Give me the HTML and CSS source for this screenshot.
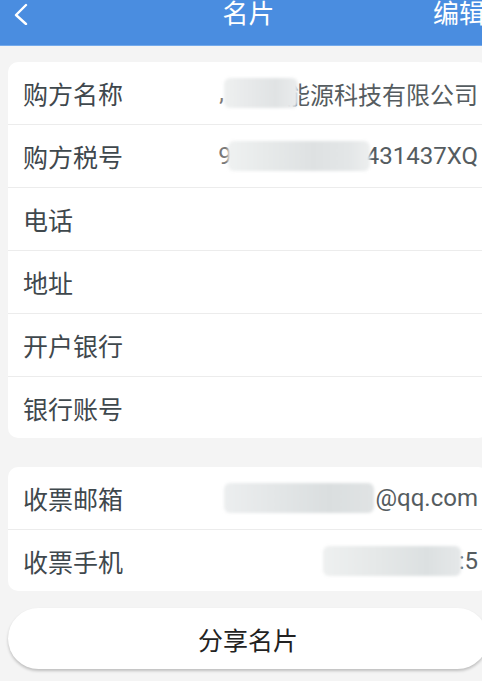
FILE: index.html
```html
<!DOCTYPE html>
<html lang="zh-CN">

<head>
    <meta charset="UTF-8">
    <meta name="viewport" content="width=device-width, initial-scale=1.0">
    <title>名片</title>
    <link rel="stylesheet" href="styles.css">
</head>

<body>
    <div class="page">
        <div class="header">
            <a class="back" href="javascript:;">
                <svg width="18" height="22" viewBox="0 0 18 22">
                    <polyline points="14,2 4,12 14,21" fill="none" stroke="#fff" stroke-width="2.4" stroke-linecap="round" stroke-linejoin="round" />
                </svg>
            </a>
            <div class="title">名片</div>
            <a class="edit" href="javascript:;">编辑</a>
        </div>

        <ul class="card">
            <li class="row">
                <span class="label">购方名称</span>
                <span class="value"><span class="dot">,</span><span class="mask mask-name"></span>能源科技有限公司</span>
            </li>
            <li class="row">
                <span class="label">购方税号</span>
                <span class="value"><span class="dot">9</span><span class="mask mask-tax"></span>431437XQ</span>
            </li>
            <li class="row"><span class="label">电话</span></li>
            <li class="row"><span class="label">地址</span></li>
            <li class="row"><span class="label">开户银行</span></li>
            <li class="row"><span class="label">银行账号</span></li>
        </ul>

        <ul class="card card-second">
            <li class="row">
                <span class="label">收票邮箱</span>
                <span class="value"><span class="mask mask-mail"></span>@qq.com</span>
            </li>
            <li class="row">
                <span class="label">收票手机</span>
                <span class="value"><span class="mask mask-phone"></span>:5</span>
            </li>
        </ul>

        <a class="share" href="javascript:;">分享名片</a>
    </div>
</body>

</html>
```

FILE: styles.css
```css
a,
ul,
li {
    list-style: none;
    text-decoration: none;
    margin: 0;
    padding: 0;
}

html,
body {
    margin: 0;
    width: 482px;
    height: 681px;
    overflow: hidden;
    background: #f4f4f4;
    font-family: Roboto, "Noto Sans CJK SC", sans-serif;
}

/* the screen is a bit wider than the shot, right side is cut */
.page {
    width: 496px;
}

.header {
    height: 45px;
    background: #4a8de0;
    border-bottom: 1px solid #74aaeb;
    display: flex;
    align-items: flex-start;
    justify-content: space-between;
    padding: 0 11px 0 12px;
    color: #fff;
}

.back {
    display: flex;
    padding-top: 3px;
    width: 56px;
}

.title {
    font-size: 26px;
    line-height: 28px;
}

.edit {
    color: #fff;
    font-size: 26px;
    line-height: 28px;
    width: 56px;
    text-align: right;
}

.card {
    margin: 16px 8px 0;
    background: #fff;
    border-radius: 10px;
    overflow: hidden;
}

.card-second {
    margin-top: 29px;
}

.row {
    height: 62px;
    display: flex;
    align-items: center;
    justify-content: space-between;
    padding: 0 10px 0 15px;
    border-bottom: 1px solid #ececec;
}

.row:last-child {
    height: 61px;
    border-bottom: 0;
}

.label {
    font-size: 25px;
    color: #3f484d;
}

.value {
    display: flex;
    align-items: center;
    font-size: 24px;
    color: #555c60;
    white-space: nowrap;
}

.dot {
    color: #777;
}

.mask {
    display: inline-block;
    height: 30px;
    border-radius: 6px;
    filter: blur(1.5px);
    position: relative;
    z-index: 1;
}

.mask-name {
    width: 74px;
    margin: 0 -12px 0 0;
    background: linear-gradient(90deg, #eef0f0, #e6e8e9 40%, #e0e3e4 70%, #eaeced);
}

.mask-tax {
    width: 142px;
    margin: 0 -4px 0 -4px;
    background: linear-gradient(90deg, #eff1f1, #e6e9e9 30%, #dee1e2 60%, #e3e6e7 85%, #edefef);
}

.mask-mail {
    width: 150px;
    margin-right: 2px;
    background: linear-gradient(90deg, #eceeef, #e3e6e7 35%, #dadedf 70%, #e0e3e4);
}

.mask-phone {
    width: 138px;
    margin-right: -2px;
    background: linear-gradient(90deg, #eef0f0, #e5e8e8 40%, #dce0e1 75%, #e5e8e9);
}

.share {
    display: flex;
    align-items: center;
    justify-content: center;
    height: 61px;
    margin: 17px 8px 0;
    background: #fff;
    border-radius: 31px;
    box-shadow: 0 2px 3px rgba(0, 0, 0, .22);
    font-size: 25px;
    color: #222;
}
```
